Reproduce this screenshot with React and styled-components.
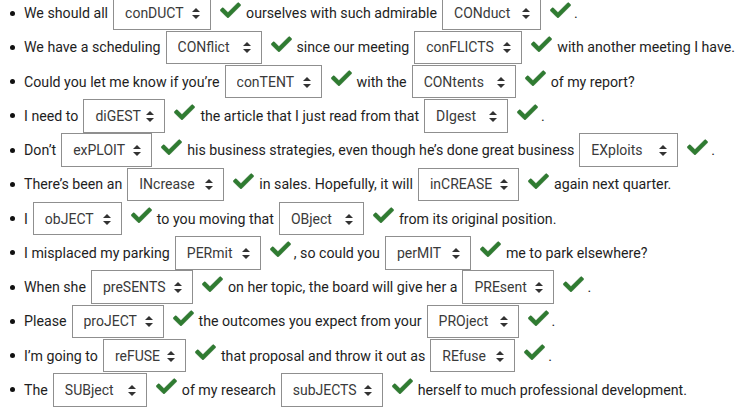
import React from 'react'
import styled, { createGlobalStyle } from 'styled-components'

const rows = [
  ['We should all', ['conDUCT', 98], 'ourselves with such admirable', ['CONduct', 99], '.'],
  ['We have a scheduling', ['CONflict', 96], 'since our meeting', ['conFLICTS', 108], 'with another meeting I have.'],
  ['Could you let me know if you\u2019re', ['conTENT', 97], 'with the', ['CONtents', 104], 'of my report?'],
  ['I need to', ['diGEST', 82], 'the article that I just read from that', ['DIgest', 84], '.'],
  ['Don\u2019t', ['exPLOIT', 91], 'his business strategies, even though he\u2019s done great business', ['EXploits', 99], '.'],
  ['There\u2019s been an', ['INcrease', 97], 'in sales. Hopefully, it will', ['inCREASE', 101], 'again next quarter.'],
  ['I', ['obJECT', 89], 'to you moving that', ['OBject', 85], 'from its original position.'],
  ['I misplaced my parking', ['PERmit', 86], ', so could you', ['perMIT', 86], 'me to park elsewhere?'],
  ['When she', ['preSENTS', 102], 'on her topic, the board will give her a', ['PREsent', 92], '.'],
  ['Please', ['proJECT', 92], 'the outcomes you expect from your', ['PROject', 92], '.'],
  ['I\u2019m going to', ['reFUSE', 83], 'that proposal and throw it out as', ['REfuse', 85], '.'],
  ['The', ['SUBject', 94], 'of my research', ['subJECTS', 102], 'herself to much professional development.'],
]

const GlobalStyle = createGlobalStyle`
  html, body {
    margin: 0;
    padding: 0;
    background: #fff;
  }
  body {
    font-family: Roboto, "Liberation Sans", sans-serif;
    color: #1e1e1e;
    overflow: hidden;
  }
`

const List = styled.ul`
  list-style: none;
  margin: -3.9px 0 0 0;
  padding: 0;
`

const Row = styled.li`
  display: flex;
  align-items: center;
  height: 34.25px;
  font-size: 14.2px;
  white-space: nowrap;
`

const Bullet = styled.span`
  width: 5px;
  height: 5px;
  border-radius: 50%;
  background: #111;
  margin: 0 9px 0 10px;
  flex: none;
`

const Words = styled.span`
  margin-left: ${p => (p.$afterCheck ? (p.$tight ? 3 : 5) : 0)}px;
`

const SelectWrap = styled.span`
  position: relative;
  display: inline-block;
  margin-left: 5px;
  flex: none;
`

const Select = styled.select`
  appearance: none;
  -webkit-appearance: none;
  box-sizing: border-box;
  width: ${p => p.$w}px;
  height: 33.5px;
  padding: 0 0 0 11px;
  border: 1px solid #8f8f8f;
  border-radius: 0;
  background: #fff;
  font-family: Roboto, "Liberation Sans", sans-serif;
  font-size: 14px;
  color: #3a3a3a;
  display: block;
`

const Arrow = styled.svg`
  position: absolute;
  right: 11px;
  top: 50%;
  margin-top: -5px;
  pointer-events: none;
`

const Check = styled.svg`
  margin-left: 9px;
  flex: none;
  margin-top: -7px;
`

function Picker({ value, w }) {
  return (
    <SelectWrap>
      <Select $w={w} defaultValue={value}>
        <option>{value}</option>
      </Select>
      <Arrow width="8" height="11" viewBox="0 0 8 11">
        <path d="M4 0 L8 4 L0 4 Z M0 7 L8 7 L4 11 Z" fill="#333" />
      </Arrow>
    </SelectWrap>
  )
}

function Tick() {
  return (
    <Check width="21" height="16" viewBox="0 0 512 400">
      <path
        d="M173.9 390.1L7.5 223.7c-10-10-10-26.2 0-36.2l36.2-36.2c10-10 26.2-10 36.2 0L192 263.4 432.1 23.3c10-10 26.2-10 36.2 0l36.2 36.2c10 10 10 26.2 0 36.2L210.1 390.1c-10 10-26.2 10-36.2 0z"
        fill="#2f7c31"
        stroke="#1f5a22"
        strokeWidth="10"
      />
    </Check>
  )
}

function App() {
  return (
    <>
      <GlobalStyle />
      <List>
        {rows.map((row, i) => (
          <Row key={i}>
            <Bullet />
            {row.map((part, j) => {
              if (Array.isArray(part)) {
                return (
                  <React.Fragment key={j}>
                    <Picker value={part[0]} w={part[1]} />
                    <Tick />
                  </React.Fragment>
                )
              }
              return (
                <Words
                  key={j}
                  $afterCheck={j > 0}
                  $tight={part.startsWith('.') || part.startsWith(',')}
                >
                  {part}
                </Words>
              )
            })}
          </Row>
        ))}
      </List>
    </>
  )
}

export default App
